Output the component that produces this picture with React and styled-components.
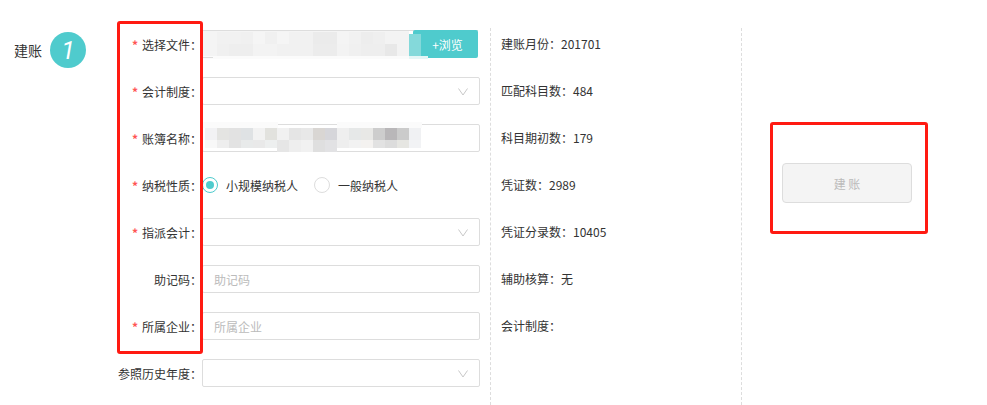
import React from "react";
import styled, { createGlobalStyle } from "styled-components";

const Global = createGlobalStyle`
  html, body { margin: 0; padding: 0; background: #fff; }
  body { font-family: "Noto Sans CJK SC", "Noto Sans", sans-serif; font-size: 12px; color: #333; }
`;

const Page = styled.div`
  position: relative;
  display: flex;
  width: 987px;
  height: 405px;
  overflow: hidden;
  padding-top: 28px;
  box-sizing: border-box;
`;
const Heading = styled.div`
  width: 110px;
  box-sizing: border-box;
  padding: 4px 0 0 14px;
  display: flex;
  gap: 8px;
  align-items: flex-start;
  flex: none;
`;
const HeadingText = styled.span`
  font-size: 14px;
  line-height: 36px;
  width: 28px;
`;
const StepBadge = styled.span`
  width: 36px;
  height: 36px;
  border-radius: 50%;
  background: #4fcbcd;
  color: #fff;
  font: italic 400 25px/37px "Roboto", sans-serif;
  text-align: center;
`;
const Form = styled.div`
  width: 370px;
  flex: none;
  padding-top: 2px;
`;
const Row = styled.div`
  display: flex;
  align-items: center;
  height: 28px;
  margin-bottom: 19px;
`;
const Label = styled.label`
  width: 92px;
  flex: none;
  text-align: right;
  white-space: nowrap;
`;
const Star = styled.span`
  color: #f55;
  font-weight: 700;
  margin-right: 4px;
`;
const Box = styled.div`
  position: relative;
  width: 278px;
  height: 28px;
  box-sizing: border-box;
  border: 1px solid #ddd;
  border-radius: 2px;
  background: #fff;
  display: flex;
  align-items: center;
  padding: 0 11px;
  color: #bbb;
`;
const Chevron = styled.svg`
  position: absolute;
  right: 11px;
  top: 10px;
  width: 10px;
  height: 8px;
`;
const FileBox = styled.div`
  position: relative;
  width: 276px;
  height: 28px;
  box-sizing: border-box;
  border-top: 1px solid #ddd;
  display: flex;
  justify-content: flex-end;
`;
const Browse = styled.button`
  width: 65px;
  height: 28px;
  margin-top: -1px;
  border: 0;
  border-radius: 2px;
  background: #4fcbcd;
  color: #fff;
  font: inherit;
  padding: 0 0 0 4px;
`;
const Mosaic = styled.svg`
  position: absolute;
  left: ${(p) => p.$left}px;
  top: ${(p) => p.$top}px;
  overflow: visible;
`;
const Radios = styled.div`
  display: flex;
  align-items: center;
`;
const RadioItem = styled.span`
  display: flex;
  align-items: center;
  gap: 8px;
  margin-right: 16px;
`;
const RadioMark = styled.span`
  width: 16px;
  height: 16px;
  box-sizing: border-box;
  border-radius: 50%;
  border: 1px solid ${(p) => (p.$on ? "#4fcbcd" : "#ddd")};
  display: flex;
  align-items: center;
  justify-content: center;
  &::after {
    content: "";
    width: 8px;
    height: 8px;
    border-radius: 50%;
    background: ${(p) => (p.$on ? "#4fcbcd" : "transparent")};
  }
`;
const Info = styled.div`
  width: 252px;
  flex: none;
  box-sizing: border-box;
  border-left: 1px dashed #ddd;
  border-right: 1px dashed #ddd;
  padding: 2px 0 0 10px;
  margin-left: 10px;
`;
const InfoRow = styled.div`
  height: 28px;
  line-height: 28px;
  margin-bottom: 19px;
`;
const Side = styled.div`
  width: 212px;
  flex: none;
  display: flex;
  justify-content: center;
  padding-top: 135px;
  margin-left: -1px;
`;
const Create = styled.button`
  width: 130px;
  height: 40px;
  border: 1px solid #ddd;
  border-radius: 4px;
  background: #f4f4f4;
  color: #bbb;
  font: inherit;
`;
const Frame = styled.div`
  position: absolute;
  left: ${(p) => p.$x}px;
  top: ${(p) => p.$y}px;
  width: ${(p) => p.$w}px;
  height: ${(p) => p.$h}px;
  box-sizing: border-box;
  border: 3px solid #ff1a12;
  border-radius: 3px;
  pointer-events: none;
`;

const Arrow = () => (
  <Chevron viewBox="0 0 10 8">
    <path d="M0.5 0.5L5 7L9.5 0.5" fill="none" stroke="#c8c8c8" />
  </Chevron>
);

const Cells = ({ rows, heights }) => {
  let top = 0;
  return (
    <>
      {rows.map((r, y) => {
        const rowTop = top;
        top += heights[y];
        return r.map((c, x) => (
          <rect key={`${x}-${y}`} x={x * 12} y={rowTop} width="12" height={heights[y]} fill={c} />
        ));
      })}
    </>
  );
};

const fileCells = [
  ["#f1f1f1","#f1f1f1","#f0f0f0","#f5f5f5","#f0f0f0","#f5f5f5","#f1f1f1","#f1f1f1","#ebebeb","#ebebeb","#f4f4f4","#f1f1f1","#ededed","#efefef","#f3f3f3","#f3f3f3"],
  ["#f0f0f0","#eeeeee","#eeeeee","#f3f3f3","#f3f3f3","#f1f1f1","#f1f1f1","#f1f1f1","#ececec","#ececec","#f3f3f3","#f0f0f0","#eeeeee","#eeeeee","#e8e8e8","#f3f3f3"],
];
const nameCells = [
  ["#f2f2f4","#e4e4e2","#e2e2e2","#dfe2e4","#f2f2f2","#e2e2de","#f1f1f1","#e5e5e5","#e8e8e8","#d9d6d3","#d6d6da","#efefef","#e6e8e8","#e8e8e6","#cdcdcd","#b9b7b9","#cbcbcb","#f0f1f3"],
  ["#f8f8f8","#eeeeee","#e3e3e3","#e8eaea","#e9e9e9","#edefef","#e6e6e6","#eeeeee","#f1f1f1","#dfdfdf","#e2e2e4","#eeeeee","#f2f2f2","#f4f2f0","#e2e2e2","#dcdcdc","#e6e6e2","#f2f3f5"],
];
const nameTail = [["#e6e6e6","#eeeeee","#f1f1f1","#dfdfdf","#e2e2e4"]];

const fields = ["建账月份：201701","匹配科目数：484","科目期初数：179","凭证数：2989","凭证分录数：10405","辅助核算：无","会计制度："];

export default function App() {
  return (
    <Page>
      <Global />
      <Heading>
        <HeadingText>建账</HeadingText>
        <StepBadge>1</StepBadge>
      </Heading>
      <Form>
        <Row>
          <Label><Star>*</Star>选择文件：</Label>
          <FileBox>
            <Browse>+浏览</Browse>
            <Mosaic $left={0} $top={0} width="226" height="28">
              <rect x="1" y="0" width="206" height="25" fill="#f4f4f4" />
              <rect x="1" y="25" width="206" height="3" fill="#fbfbfb" />
              <rect x="1" y="26" width="10" height="1" fill="#dddddd" />
              <g transform="translate(15 1)"><Cells rows={fileCells} heights={[12, 12]} /></g>
              <rect x="207" y="3" width="12" height="22" fill="#84d9da" />
              <rect x="207" y="25" width="19" height="3" fill="#e4f6f6" />
            </Mosaic>
          </FileBox>
        </Row>
        <Row>
          <Label><Star>*</Star>会计制度：</Label>
          <Box><Arrow /></Box>
        </Row>
        <Row>
          <Label><Star>*</Star>账簿名称：</Label>
          <Box>
            <Mosaic $left={2} $top={3} width="216" height="24">
              <rect x="-2" y="-6" width="75" height="6" fill="#fbfbfb" />
              <rect x="132" y="-6" width="85" height="6" fill="#fbfbfb" />
              <Cells rows={nameCells} heights={[12, 8]} />
              <g transform="translate(72 20)"><Cells rows={nameTail} heights={[4]} /></g>
            </Mosaic>
          </Box>
        </Row>
        <Row>
          <Label><Star>*</Star>纳税性质：</Label>
          <Radios>
            <RadioItem><RadioMark $on />小规模纳税人</RadioItem>
            <RadioItem><RadioMark />一般纳税人</RadioItem>
          </Radios>
        </Row>
        <Row>
          <Label><Star>*</Star>指派会计：</Label>
          <Box><Arrow /></Box>
        </Row>
        <Row>
          <Label>助记码：</Label>
          <Box>助记码</Box>
        </Row>
        <Row>
          <Label><Star>*</Star>所属企业：</Label>
          <Box>所属企业</Box>
        </Row>
        <Row>
          <Label>参照历史年度：</Label>
          <Box><Arrow /></Box>
        </Row>
      </Form>
      <Info>
        {fields.map((f) => <InfoRow key={f}>{f}</InfoRow>)}
      </Info>
      <Side>
        <Create disabled>建 账</Create>
      </Side>
      <Frame $x={117} $y={21} $w={86} $h={333} />
      <Frame $x={770} $y={122} $w={158} $h={112} />
    </Page>
  );
}
